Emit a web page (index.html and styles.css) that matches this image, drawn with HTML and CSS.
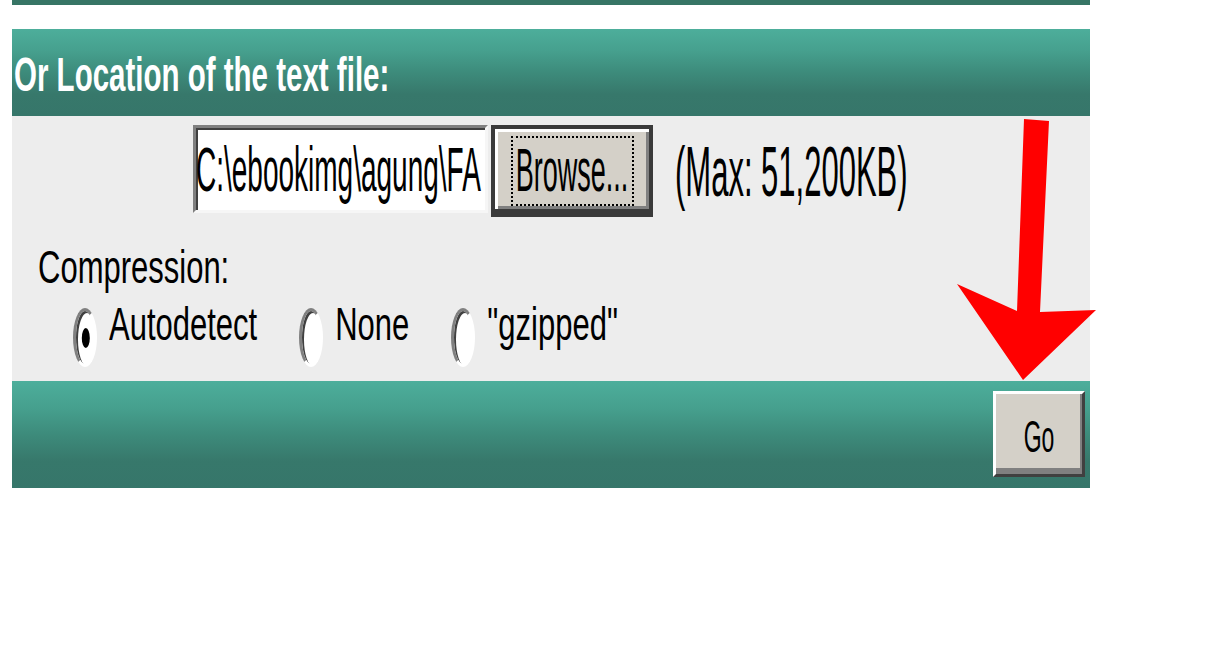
FILE: index.html
```html
<!DOCTYPE html>
<html lang="en">
<head>
    <meta charset="UTF-8">
    <meta name="viewport" content="width=device-width, initial-scale=1.0">
    <title>Upload text file</title>
    <link rel="stylesheet" href="styles.css">
</head>
<body>

    <div class="page">
        <div class="top-strip"></div>

        <form class="upload-form" onsubmit="return false;">
            <div class="bar bar-head">
                <h2>Or Location of the text file:</h2>
            </div>

            <div class="panel">
                <div class="file-row">
                    <div class="path-box"><span class="txt-big">C:\ebookimg\agung\FA</span></div>
                    <button type="button" class="browse-btn">
                        <span class="focus-ring"><span class="txt-big">Browse...</span></span>
                    </button>
                    <span class="max-note txt-big">(Max: 51,200KB)</span>
                </div>

                <div class="compress-label">Compression:</div>

                <div class="radio-row">
                    <label class="opt"><input type="radio" name="compression" value="auto" checked> <span>Autodetect</span></label>
                    <label class="opt"><input type="radio" name="compression" value="none"> <span>None</span></label>
                    <label class="opt"><input type="radio" name="compression" value="gzip"> <span>"gzipped"</span></label>
                </div>
            </div>

            <div class="bar bar-foot">
                <button type="submit" class="go-btn"><span>Go</span></button>
            </div>
        </form>
    </div>

    <!-- red arrow pointing at the Go button -->
    <svg class="arrow" width="1211" height="655" viewBox="0 0 1211 655">
        <polygon fill="#ff0000" points="1024,119 1049,121 1040,312 1096,310 1023,380 957,284 1017,311"/>
    </svg>

</body>
</html>
```

FILE: styles.css
```css
body {
    margin: 0;
    background-color: #fff;
    font-family: "Liberation Sans", Arial, sans-serif;
    color: #000;
}

.page {
    width: 1078px;
    margin-left: 12px;
}

.top-strip {
    height: 5px;
    background-color: #377565;
}

.upload-form {
    margin: 24px 0 0 0;
}

.bar {
    background: linear-gradient(to bottom, #4dae9b 0%, #46a08e 25%, #3d8b7b 50%, #37786b 75%, #36766a 100%);
}

.bar-head {
    height: 87px;
    box-sizing: border-box;
    display: flex;
    align-items: center;
    padding: 5px 0 0 2px;
}

.bar-head h2 {
    margin: 0;
    font-size: 29.5px;
    line-height: 30px;
    font-weight: bold;
    color: #fff;
    transform: scaleY(1.6);
}

.panel {
    background-color: #ededed;
    height: 265px;
}

.txt-big {
    display: inline-block;
    line-height: 30px;
    transform: scaleY(2.25);
}

.file-row {
    display: flex;
    align-items: flex-start;
    padding: 9px 0 0 181px;
}

.path-box {
    width: 295px;
    height: 88px;
    box-sizing: border-box;
    background-color: #fff;
    border: 3px solid;
    border-color: #808080 #f6f6f6 #f6f6f6 #808080;
    box-shadow: inset 2px 2px 0 #404040;
    display: flex;
    align-items: center;
    padding: 4px 0 0 0;
    overflow: hidden;
    white-space: nowrap;
    font-size: 28px;
}

.browse-btn {
    margin-left: 3px;
    width: 162px;
    height: 92px;
    box-sizing: border-box;
    padding: 0;
    background-color: #d4d0c8;
    border: 4px solid #3a3a3a;
    border-bottom-width: 8px;
    box-shadow: inset 3px 3px 0 #fff, inset -3px -3px 0 #808080;
    display: flex;
    align-items: center;
    justify-content: center;
    font-family: inherit;
    font-size: 27px;
    color: #000;
    cursor: pointer;
}

.focus-ring {
    width: 123px;
    height: 70px;
    margin-top: 4px;
    box-sizing: border-box;
    border: 2px dotted #000;
    display: flex;
    align-items: center;
    justify-content: center;
}

.max-note {
    margin: 33px 0 0 22px;
    font-size: 31px;
    white-space: nowrap;
}

.compress-label {
    margin: 36px 0 0 26px;
    font-size: 31px;
    line-height: 30px;
    transform: scaleY(1.5);
}

.radio-row {
    display: flex;
    margin-top: 25px;
    padding-left: 61px;
}

.opt {
    display: flex;
    align-items: flex-start;
    margin-right: 42px;
    font-size: 31px;
    cursor: pointer;
}

.opt span {
    display: inline-block;
    margin-top: 2px;
    line-height: 30px;
    transform: scaleY(1.5);
}

.opt input[type="radio"] {
    appearance: none;
    -webkit-appearance: none;
    margin: 0 12px 0 0;
    width: 24px;
    height: 59px;
    flex: none;
    box-sizing: border-box;
    border-radius: 50%;
    background-color: #fff;
    border: 3px solid;
    border-color: #808080 #fff #fff #808080;
    box-shadow: inset 2px 2px 0 #404040;
    position: relative;
    outline: none;
    cursor: pointer;
}

.opt input[type="radio"]:checked::after {
    content: '';
    position: absolute;
    width: 8px;
    height: 20px;
    border-radius: 50%;
    background-color: #000;
    top: 50%;
    left: 50%;
    transform: translate(-40%, -50%);
}

.bar-foot {
    height: 107px;
    box-sizing: border-box;
    display: flex;
    justify-content: flex-end;
    align-items: flex-start;
    padding: 10px 5px 0 0;
}

.go-btn {
    width: 92px;
    height: 86px;
    box-sizing: border-box;
    padding: 6px 0 0 0;
    background-color: #d4d0c8;
    border: 3px solid;
    border-color: #fff #404040 #404040 #fff;
    box-shadow: inset -2px -6px 0 #808080;
    font-family: inherit;
    font-size: 23px;
    color: #000;
    cursor: pointer;
}

.go-btn span {
    display: inline-block;
    line-height: 24px;
    transform: scaleY(1.9);
}

.arrow {
    position: absolute;
    left: 0;
    top: 0;
    pointer-events: none;
}
```
